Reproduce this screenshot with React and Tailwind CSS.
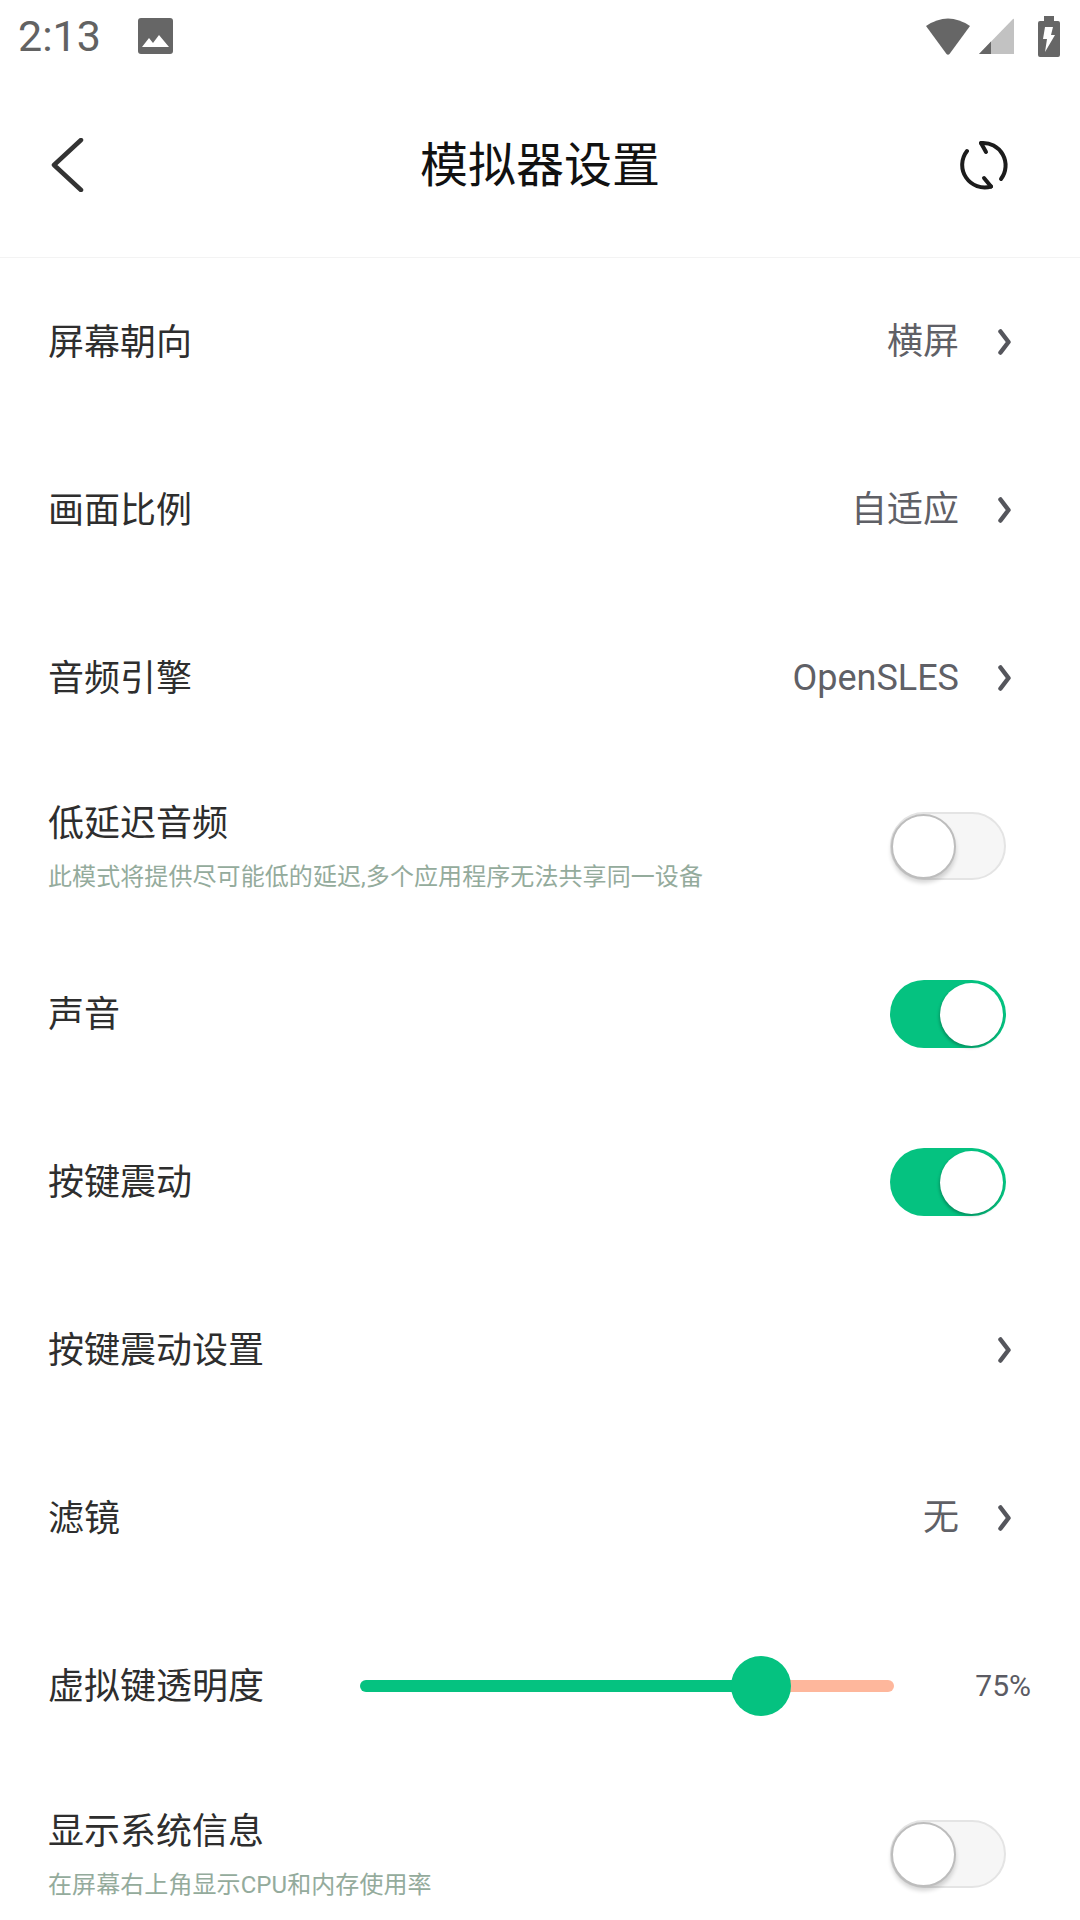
const FONT = "font-['Roboto','Noto_Sans_CJK_SC',sans-serif]";

function StatusBar() {
  return (
    <div className="h-[72px] shrink-0 flex items-center pl-[18px] pr-[20px]">
      <span className="text-[43px] leading-none text-[#626262] w-[120px]">2:13</span>
      <svg width="35" height="36" viewBox="0 0 35 36">
        <rect width="35" height="36" rx="3" fill="#666666" />
        <path d="M4 29 L11 20 L15 25 L21 17 L31 29 Z" fill="#ffffff" />
      </svg>
      <div className="flex-1" />
      <svg width="46" height="38" viewBox="0 0 46 38">
        <path d="M1 9 Q23 -6 45 9 L24.500 37 Q23 38.500 21.500 37 Z" fill="#666666" />
      </svg>
      <svg className="ml-[8px]" width="35" height="36" viewBox="0 0 35 36">
        <path d="M0 36 L34 1 Q35 0 35 2 L35 36 Z" fill="#c2c2c2" />
        <path d="M0 36 L12 23.500 L12 36 Z" fill="#666666" />
      </svg>
      <svg className="ml-[24px]" width="22" height="41" viewBox="0 0 22 41">
        <path d="M6 0 H16 V5 H20 Q22 5 22 7 V39 Q22 41 20 41 H2 Q0 41 0 39 V7 Q0 5 2 5 H6 Z" fill="#666666" />
        <path d="M7 11 H15 L13 19 H17 L7 36 L9 23 H5 Z" fill="#ffffff" />
      </svg>
    </div>
  );
}

function NavBar() {
  return (
    <div className="h-[186px] shrink-0 flex items-center border-b border-[#f3f3f3] px-[50px]">
      <div className="w-[200px]">
        <svg width="34" height="54" viewBox="0 0 34 54">
          <path d="M31 2 L4 27 L31 52" fill="none" stroke="#333333" strokeWidth="4.5" strokeLinecap="round" strokeLinejoin="round" />
        </svg>
      </div>
      <h1 className="flex-1 text-center text-[48px] leading-none pt-[2px] text-[#111111]">模拟器设置</h1>
      <div className="w-[200px] flex justify-end pr-[21px]">
        <svg width="50" height="50" viewBox="0 0 50 50" fill="none" stroke="#1c1c1c" strokeWidth="4" strokeLinecap="round" strokeLinejoin="round">
          <path d="M22 3 A22.500 22.500 0 0 1 42 39" />
          <path d="M22 3 L27 12" />
          <path d="M8 11 A22.500 22.500 0 0 0 32 46.500" />
          <path d="M32 46.500 L25 38" />
        </svg>
      </div>
    </div>
  );
}

function Toggle({ on }) {
  if (on) {
    return (
      <div className="w-[116px] h-[68px] rounded-full bg-[#05c280] flex items-center justify-end pr-[3px]">
        <div className="w-[63px] h-[63px] rounded-full bg-white shadow-[-1px_2px_3px_rgba(0,0,0,0.25)]" />
      </div>
    );
  }
  return (
    <div className="w-[116px] h-[68px] rounded-full bg-[#f6f6f6] border-[2px] border-[#e4e4e4] flex items-center">
      <div className="w-[65px] h-[65px] rounded-full bg-white border-[2px] border-[#bdbdbd] shadow-[0_4px_4px_rgba(0,0,0,0.16)] -ml-[1px]" />
    </div>
  );
}

function Row({ title, sub, children }) {
  return (
    <div className="h-[168px] shrink-0 flex items-center justify-between pl-[48px] pr-[74px]">
      <div className="flex flex-col pt-[2px]">
        <span className="text-[36px] leading-[46px] text-[#2e2e2e]">{title}</span>
        {sub && <span className="text-[24px] leading-[32px] mt-[14px] tracking-[0.08px] text-[#94ab9c]">{sub}</span>}
      </div>
      {children}
    </div>
  );
}

function ValueRow({ title, value }) {
  return (
    <Row title={title}>
      <div className="flex items-center">
        {value && <span className="text-[36px] leading-none text-[#5f6066]">{value}</span>}
        <svg className="ml-[39px] -mr-[5px]" width="13" height="26" viewBox="0 0 13 26">
          <path d="M2.500 2.500 L10.500 13 L2.500 23.500" fill="none" stroke="#55565c" strokeWidth="4.5" strokeLinecap="round" strokeLinejoin="round" />
        </svg>
      </div>
    </Row>
  );
}

function SliderRow() {
  return (
    <div className="h-[168px] shrink-0 flex items-center pl-[48px] pr-[49px]">
      <span className="text-[36px] leading-[46px] pt-[2px] text-[#2e2e2e] w-[312px]">虚拟键透明度</span>
      <div className="w-[534px] flex items-center">
        <div className="w-[372px] h-[12px] rounded-l-full bg-[#05c280]" />
        <div className="w-[60px] h-[60px] rounded-full bg-[#05c280] shrink-0 -mx-[1px] relative" />
        <div className="flex-1 h-[12px] rounded-r-full bg-[#feb79c]" />
      </div>
      <span className="ml-auto text-[30px] leading-none text-[#5b5b63]">75%</span>
    </div>
  );
}

export default function App() {
  return (
    <div className={`w-[1080px] h-[1920px] overflow-hidden bg-white flex flex-col ${FONT}`}>
      <StatusBar />
      <NavBar />
      <ValueRow title="屏幕朝向" value="横屏" />
      <ValueRow title="画面比例" value="自适应" />
      <ValueRow title="音频引擎" value="OpenSLES" />
      <Row title="低延迟音频" sub="此模式将提供尽可能低的延迟,多个应用程序无法共享同一设备">
        <Toggle on={false} />
      </Row>
      <Row title="声音">
        <Toggle on />
      </Row>
      <Row title="按键震动">
        <Toggle on />
      </Row>
      <ValueRow title="按键震动设置" />
      <ValueRow title="滤镜" value="无" />
      <SliderRow />
      <Row title="显示系统信息" sub="在屏幕右上角显示CPU和内存使用率">
        <Toggle on={false} />
      </Row>
    </div>
  );
}
